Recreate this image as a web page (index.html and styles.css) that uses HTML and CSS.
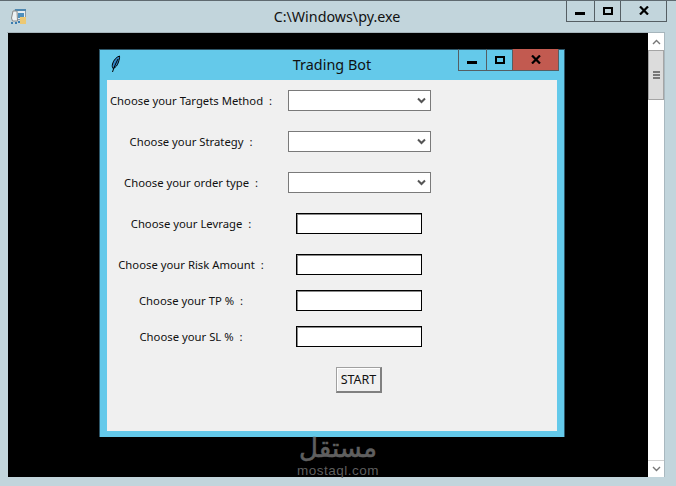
FILE: index.html
```html
<!DOCTYPE html>
<html lang="en">
<head>
    <meta charset="UTF-8">
    <title>Trading Bot</title>
    <link rel="stylesheet" href="styles.css">
</head>
<body>

    <div class="titlebar">
        <svg class="py-icon" width="17" height="17" viewBox="0 0 17 17">
            <path d="M5 1.500h10.500v10H5z" fill="#e4ecf0" stroke="#8b9aa5"/>
            <path d="M5 1h11v2H5z" fill="#4f88b0"/>
            <path d="M8 5h6v5H8z" fill="#4d8fbd"/>
            <path d="M10 9h6v7h-6z" fill="#ecc873"/>
            <path d="M3 3 1.500 10l1 3h5L7 3z" fill="#eef2f4" stroke="#8a8a8a"/>
            <path d="M1 14h2v2H1zM5 14h2v2H5zM8 13h2v2H8z" fill="#3a7cb0"/>
        </svg>
        <div class="title">C:\Windows\py.exe</div>
        <div class="win-btns">
            <div class="win-btn min"><span class="i-min"></span></div>
            <div class="win-btn max"><span class="i-max"></span></div>
            <div class="win-btn close"><svg width="10" height="9" viewBox="0 0 10 9"><path d="M1 .5l8 8M9 .5l-8 8" fill="none" stroke="#000" stroke-width="2.200"/></svg></div>
        </div>
    </div>

    <div class="console-row">
        <div class="console">
            <div class="tk-window">
                <div class="tk-bar">
                    <svg class="feather" width="10" height="18" viewBox="0 0 10 18">
                        <path d="M8.500 1C5.500 2 2.500 5 1.500 9c-.5 2-.2 3.500.5 4.500 3-1 4.500-3.500 5.500-6.500.6-2 1.300-4 1-6z" fill="#2f86c8" stroke="#000"/>
                        <path d="M7 4C5 8 3 12 1.500 17" fill="none" stroke="#000"/>
                    </svg>
                    <div class="tk-title">Trading Bot</div>
                    <div class="win-btns tk-btns">
                        <div class="win-btn min"><span class="i-min"></span></div>
                        <div class="win-btn max"><span class="i-max"></span></div>
                        <div class="win-btn close red"><svg width="10" height="9" viewBox="0 0 10 9"><path d="M1 .5l8 8M9 .5l-8 8" fill="none" stroke="#000" stroke-width="2.200"/></svg></div>
                    </div>
                </div>
                <div class="form">
                    <div class="row">
                        <label>Choose your Targets Method &nbsp;:</label>
                        <div class="select"><svg width="9" height="7" viewBox="0 0 9 7"><path d="M1 1.500l3.500 3.500L8 1.500" fill="none" stroke="#555" stroke-width="2"/></svg></div>
                    </div>
                    <div class="row">
                        <label>Choose your Strategy &nbsp;:</label>
                        <div class="select"><svg width="9" height="7" viewBox="0 0 9 7"><path d="M1 1.500l3.500 3.500L8 1.500" fill="none" stroke="#555" stroke-width="2"/></svg></div>
                    </div>
                    <div class="row">
                        <label>Choose your order type &nbsp;:</label>
                        <div class="select"><svg width="9" height="7" viewBox="0 0 9 7"><path d="M1 1.500l3.500 3.500L8 1.500" fill="none" stroke="#555" stroke-width="2"/></svg></div>
                    </div>
                    <div class="row">
                        <label>Choose your Levrage &nbsp;:</label>
                        <div class="entry"></div>
                    </div>
                    <div class="row tight">
                        <label>Choose your Risk Amount &nbsp;:</label>
                        <div class="entry"></div>
                    </div>
                    <div class="row tight">
                        <label>Choose your TP % &nbsp;:</label>
                        <div class="entry"></div>
                    </div>
                    <div class="row">
                        <label>Choose your SL % &nbsp;:</label>
                        <div class="entry"></div>
                    </div>
                    <div class="row">
                        <span></span>
                        <button class="start">START</button>
                    </div>
                </div>
            </div>
            <div class="watermark">
                <div class="wm-ar" lang="ar" dir="rtl">مستقل</div>
                <div class="wm-en">mostaql.com</div>
            </div>
        </div>
        <div class="scrollbar">
            <div class="sb-btn"><svg width="9" height="6" viewBox="0 0 9 6"><path d="M1 5l3.500-3.500L8 5" fill="none" stroke="#777" stroke-width="1.400"/></svg></div>
            <div class="sb-thumb"><i></i><i></i><i></i></div>
            <div class="sb-track"></div>
            <div class="sb-btn down"><svg width="9" height="6" viewBox="0 0 9 6"><path d="M1 1l3.500 3.500L8 1" fill="none" stroke="#777" stroke-width="1.400"/></svg></div>
        </div>
    </div>

</body>
</html>
```

FILE: styles.css
```css
* {
    box-sizing: border-box;
}
html, body {
    margin: 0;
    height: 486px;
    overflow: hidden;
}
body {
    font-family: "Noto Sans", "Open Sans", sans-serif;
    background-color: #c2d5dc;
    color: #111;
    border-top: 1px solid #5f6a70;
    display: flex;
    flex-direction: column;
}

/* outer console window */
.titlebar {
    height: 32px;
    position: relative;
    flex: none;
    border-bottom: 1px solid #a6b5bc;
    margin-left: 7px;
    margin-right: 11px;
}
.py-icon {
    position: absolute;
    left: 3px;
    top: 7px;
}
.title {
    text-align: center;
    font-size: 14.3px;
    line-height: 31px;
    margin-left: -9px;
    margin-right: -11px;
}
.win-btns {
    position: absolute;
    right: -2px;
    top: -1px;
    display: flex;
    height: 22px;
    border: 1px solid #555e63;
    border-top: none;
}
.win-btn {
    height: 100%;
    display: flex;
    align-items: center;
    justify-content: center;
    border-left: 1px solid #555e63;
}
.win-btn.min {
    width: 27px;
    border-left: none;
    align-items: flex-end;
    padding-bottom: 6px;
    padding-right: 1px;
}
.win-btn.max {
    width: 26px;
}
.win-btn.close {
    width: 46px;
}
.win-btn.red {
    background-color: #c25a50;
}
.i-min {
    display: block;
    width: 10px;
    height: 3px;
    background-color: #000;
}
.i-max {
    display: block;
    width: 10px;
    height: 8px;
    border: 2px solid #000;
}

.console-row {
    display: flex;
    margin-left: 8px;
    margin-right: 11px;
    height: 444px;
    flex: none;
}
.console {
    width: 640px;
    background-color: #000;
    position: relative;
    padding: 16px 0 0 91px;
}

/* tk window */
.tk-window {
    width: 466px;
    height: 388px;
    background-color: #64c9ea;
    border: 1px solid #2c5568;
    border-bottom: none;
    padding: 0 7px 6px 7px;
    display: flex;
    flex-direction: column;
}
.tk-bar {
    height: 30px;
    position: relative;
    flex: none;
}
.feather {
    position: absolute;
    left: 4px;
    top: 5px;
}
.tk-title {
    text-align: center;
    font-size: 14.4px;
    line-height: 30px;
}
.tk-btns {
    right: -2px;
    top: -1px;
    height: 22px;
}

.form {
    flex: 1;
    background-color: #f0f0f0;
    padding-top: 10px;
}
.row {
    display: grid;
    grid-template-columns: 168px 168px;
    justify-items: center;
    align-items: center;
    height: 21px;
    margin-bottom: 20px;
}
.row.tight {
    margin-bottom: 15px;
}
label {
    font-size: 11.3px;
    white-space: nowrap;
}
.select {
    width: 143px;
    height: 21px;
    background-color: #fff;
    border: 1px solid #7a7a7a;
    display: flex;
    align-items: center;
    justify-content: flex-end;
    padding-right: 4px;
}
.entry {
    width: 126px;
    height: 21px;
    background-color: #fff;
    border: 1px solid #000;
    box-shadow: inset 1px 1px 0 #8a8a8a;
}
.start {
    font-family: inherit;
    font-size: 12.5px;
    color: #111;
    width: 46px;
    height: 26px;
    padding: 0;
    align-self: start;
    background-color: #f0f0f0;
    border: 1px solid #a0a0a0;
    border-right: 2px solid #808080;
    border-bottom: 2px solid #808080;
    box-shadow: inset 1px 1px 0 #fff;
}

/* scrollbar */
.scrollbar {
    width: 17px;
    background-color: #fff;
    display: flex;
    flex-direction: column;
    border-right: 1px solid #a9b8bf;
}
.sb-btn {
    height: 17px;
    flex: none;
    display: flex;
    align-items: center;
    justify-content: center;
}
.sb-btn.down {
    border-top: 1px solid #d0d0d0;
}
.sb-thumb {
    height: 50px;
    flex: none;
    background-color: #dcdcdc;
    border: 1px solid #a5a5a5;
    display: flex;
    flex-direction: column;
    align-items: center;
    justify-content: center;
    gap: 1px;
}
.sb-thumb i {
    display: block;
    width: 7px;
    height: 2px;
    background-color: #777;
}
.sb-track {
    flex: 1;
}

/* watermark */
.watermark {
    position: absolute;
    left: 288px;
    top: 400px;
    width: 84px;
    color: #5f5f5f;
    text-align: center;
}
.wm-ar {
    font-family: "DejaVu Sans", sans-serif;
    font-size: 26px;
    line-height: 30px;
    -webkit-text-stroke: 0.6px #5f5f5f;
}
.wm-en {
    font-family: "Liberation Sans", sans-serif;
    font-size: 13.5px;
    line-height: 15px;
    letter-spacing: 0.5px;
    white-space: nowrap;
}
```
